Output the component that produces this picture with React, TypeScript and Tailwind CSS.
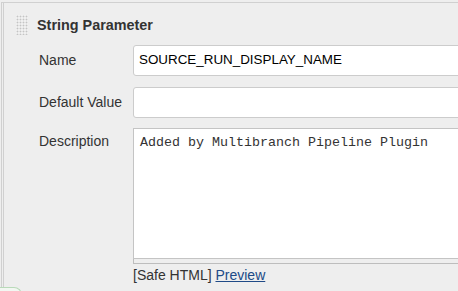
import React from "react";

function Grip() {
  const dots: React.ReactElement[] = [];
  for (let r = 0; r < 7; r++) {
    for (let c = 0; c < 4; c++) {
      dots.push(<rect key={`${r}-${c}`} x={c * 3 + 0.5} y={r * 3 + 0.5} width={2} height={2} fill="#c4c4c4" />);
    }
  }
  return (
    <svg width="12" height="20" viewBox="0 0 12 20" className="block shrink-0">
      <rect x="0" y="0" width="12" height="20" fill="#ffffff" />
      {dots}
    </svg>
  );
}

export default function App() {
  return (
    <div
      className="w-[458px] h-[291px] overflow-hidden bg-[#eeeeee] flex flex-col"
      style={{ fontFamily: '"Liberation Sans", Arial, sans-serif' }}
    >
      <div className="pt-[2px] pl-[1px] h-[287px] shrink-0">
        <div className="h-[285px] border-l border-t border-[#d0d0d0] pl-[1px]">
          <div className="h-full border-l border-[#d0d0d0] pl-[12px]">
            <div className="flex items-center pt-[12px]">
              <Grip />
              <div className="ml-[9px] text-[14.4px] font-bold text-[#333333] leading-[20px]">String Parameter</div>
            </div>

            <div className="mt-[10px] flex flex-col pl-[23px]">
              <div className="flex items-center">
                <div className="w-[94px] shrink-0 text-[14px] text-[#333333]">Name</div>
                <div className="w-[340px] h-[31px] shrink-0 bg-white border border-[#cccccc] rounded-[3px] flex items-center pl-[5px] text-[13.4px] text-black">
                  SOURCE_RUN_DISPLAY_NAME
                </div>
              </div>
              <div className="flex items-center mt-[11px]">
                <div className="w-[94px] shrink-0 text-[14px] text-[#333333]">Default Value</div>
                <div className="w-[340px] h-[31px] shrink-0 bg-white border border-[#cccccc] rounded-[3px]" />
              </div>
              <div className="flex items-start mt-[10px]">
                <div className="w-[94px] shrink-0 text-[14px] text-[#333333] pt-[5px] leading-[16px]">Description</div>
                <div className="flex flex-col shrink-0">
                  <div
                    className="w-[340px] h-[131px] bg-white border border-[#c4c4c4] pl-[6px] pt-[6px] text-[13.33px] leading-[15px] text-[#333333]"
                    style={{ fontFamily: '"Liberation Mono", "Courier New", monospace' }}
                  >
                    Added by Multibranch Pipeline Plugin
                  </div>
                  <div className="w-[340px] h-[5px] border-l border-b border-[#bdbdbd] bg-[#eeeeee]" />
                  <div className="mt-[3px] text-[14px] leading-[16px] text-[#333333]">
                    [Safe HTML] <span className="text-[#204a87] underline">Preview</span>
                  </div>
                </div>
              </div>
            </div>
          </div>
        </div>
      </div>
      <div className="w-[22px] h-[10px] shrink-0 border-t border-r border-[#b9dab9] rounded-tr-[8px] bg-[#f2f7f2]" />
    </div>
  );
}
